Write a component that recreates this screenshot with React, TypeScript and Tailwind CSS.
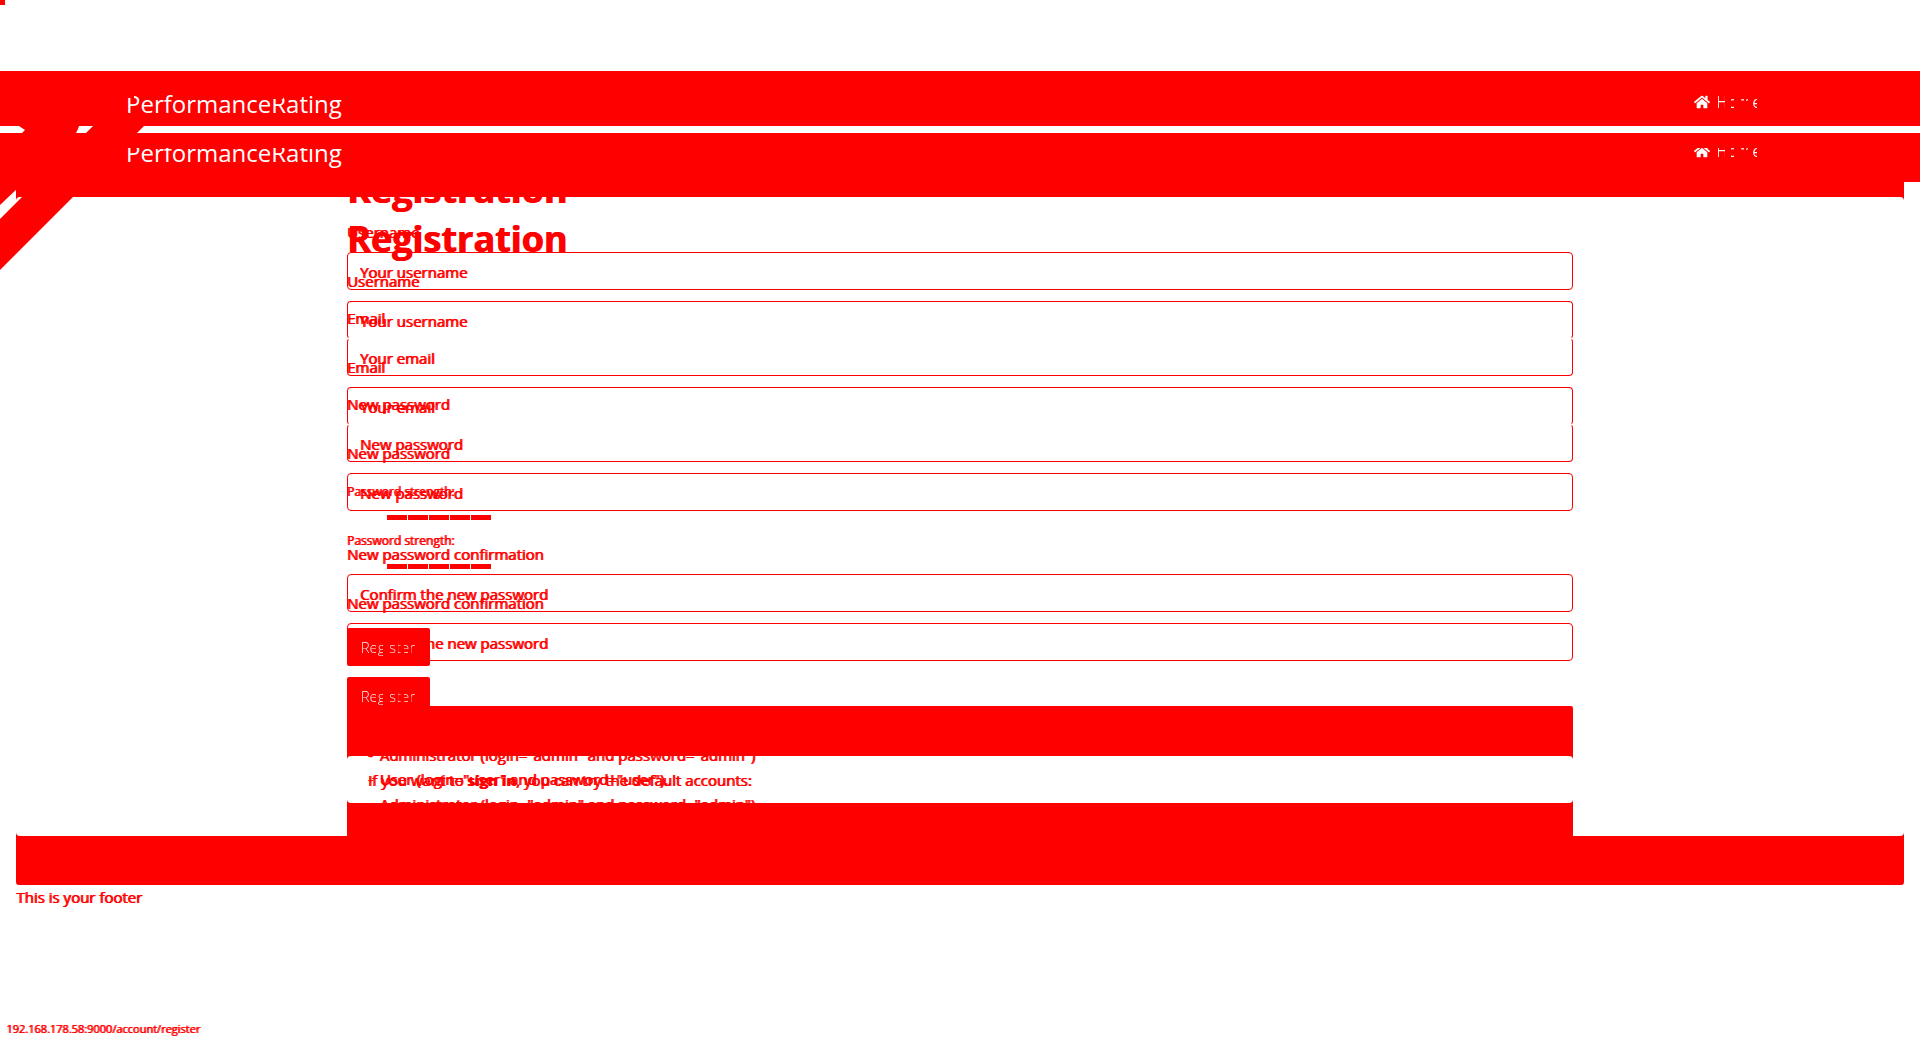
import { FaHome } from "react-icons/fa";

const homeFill =
  "bg-[linear-gradient(to_right,red_2px,white_2px_9px,red_9px_15px,white_15px_18px,red_18px_25px,white_25px_28px,red_28px_30px,white_30px_32px,red_32px_37px,white_37px_41px,red_41px)]";

const registerFill =
  "bg-[linear-gradient(to_right,red_1px,white_1px_8px,red_8px_9px,white_9px_15px,red_15px_17px,white_17px_22px,red_22px_29px,white_29px_35px,red_35px_37px,white_37px_40px,red_40px_43px,white_43px_49px,red_49px_50px,white_50px)]";

function Nav({ late = false }: { late?: boolean }) {
  return (
    <div className="flex items-center justify-between pl-[126px] pr-[160px] leading-8 text-white">
      <a href="#brand" className="relative text-2xl leading-8">
        PerformanceRating
        {!late && (
          <>
            <span className="absolute left-0 top-[7px] h-[3px] w-2 bg-[#f00]" />
            <span className="absolute left-[145px] top-[7px] h-1 w-3 bg-[#f00]" />
          </>
        )}
      </a>
      <a href="#home" className="flex items-center gap-1.5 pb-1 text-base leading-7">
        <FaHome className="size-4" />
        <span className={`w-11 bg-clip-text text-transparent ${homeFill}`}>Home</span>
      </a>
    </div>
  );
}

function Field({
  id,
  label,
  hint,
  edge = "",
  type = "text",
}: {
  id: string;
  label: string;
  hint: string;
  edge?: string;
  type?: string;
}) {
  return (
    <div className="mb-4">
      <label htmlFor={id} className="mb-2 block leading-6">
        {label}
      </label>
      <input
        id={id}
        type={type}
        placeholder={hint}
        className={`block h-[38px] w-full rounded border border-[#f00] bg-transparent px-3 pt-px placeholder:text-[#f00] placeholder:opacity-100 [text-shadow:1px_0_#f00] ${edge}`}
      />
    </div>
  );
}

function RegisterForm({ id, shifted = false }: { id: string; shifted?: boolean }) {
  const top = shifted ? "" : "border-t-transparent";
  const bottom = shifted ? "border-b-transparent" : "";
  return (
    <form className={`col-start-1 row-start-1 ${shifted ? "mt-[18px]" : "-mt-[31px]"}`}>
      <h1 className="mb-1.5 text-[36px] font-bold leading-[48px]">Registration</h1>
      <Field id={`${id}-user`} label="Username" hint="Your username" edge={bottom} />
      <Field id={`${id}-email`} label="Email" hint="Your email" edge={`${top} ${bottom}`} />
      <Field id={`${id}-pass`} label="New password" hint="New password" type="password" edge={top} />
      <div className="h-16 pt-1 text-xs leading-5">
        Password strength:
        <div className="ml-10 mt-[13px] flex gap-px">
          {[0, 1, 2, 3, 4].map((n) => (
            <span key={n} className="h-[5px] w-5 bg-[#f00]" />
          ))}
        </div>
      </div>
      <Field
        id={`${id}-confirm`}
        label="New password confirmation"
        hint="Confirm the new password"
        type="password"
      />
      <button
        type="button"
        className="relative block h-[38px] w-[83px] rounded-[2px] bg-[#f00] pl-3.5 text-left font-light [text-shadow:none]"
      >
        <span className={`bg-clip-text text-transparent ${registerFill}`}>Register</span>
      </button>
    </form>
  );
}

function Accounts({ shifted = false }: { shifted?: boolean }) {
  return (
    <div className={`col-start-1 row-start-1 ${shifted ? "mt-3" : "-mt-[37px]"}`}>
      <p>
        If you want to <a href="#signin" className="font-bold">sign in</a>, you can try the default accounts:
      </p>
      <p>
        <span className="mr-[3px]">-</span> Administrator (login="admin" and password="admin")
      </p>
      <p>
        <span className="mr-[3px]">-</span> User (login="user" and password="user").
      </p>
    </div>
  );
}

export default function App() {
  return (
    <div className="relative flex min-h-screen flex-col overflow-hidden bg-white font-['Open_Sans','Noto_Sans',sans-serif] text-[15px] text-[#f00] [text-shadow:1px_0_#f00]">
      <span className="absolute left-0 top-0 size-[5px] bg-[#f00]" />
      <header className="mt-[71px] [text-shadow:none]">
        <div className="h-[55px] bg-[#f00] pt-[17px]">
          <Nav />
        </div>
        <div className="mt-[7px] h-[49px] bg-[#f00] pt-[15px]">
          <div className="overflow-hidden">
            <div className="-mt-[11px]">
              <Nav late />
            </div>
          </div>
        </div>
      </header>
      <svg className="absolute left-0 top-[126px] z-10" width="145" height="145" viewBox="0 0 145 145" fill="#f00" aria-hidden="true">
        <path d="M19 0H79L78 3L76 7L0 79V29L25 4Z" />
        <path d="M93 0H144L0 144V93Z" />
      </svg>

      <main className="mx-4 rounded-b-[3px] bg-[#f00] pb-[49px] pt-[15px]">
        <div className="rounded bg-white">
          <div className="mx-auto w-2/3 px-4">
            <div className="relative z-0 grid">
              <RegisterForm id="first" />
              <RegisterForm id="second" shifted />
            </div>
            <section className="relative -mt-[9px] rounded-t-[2px] bg-[#f00] pb-[33px] pt-[50px]">
              <div className="grid h-[47px] overflow-hidden rounded bg-white px-[21px] leading-6">
                <Accounts />
                <Accounts shifted />
              </div>
            </section>
          </div>
        </div>
      </main>
      <footer className="mx-4 leading-6">This is your footer</footer>
      <div className="mt-auto px-1.5 pb-0.5 text-[11px] leading-[18px]">192.168.178.58:9000/account/register</div>
    </div>
  );
}
